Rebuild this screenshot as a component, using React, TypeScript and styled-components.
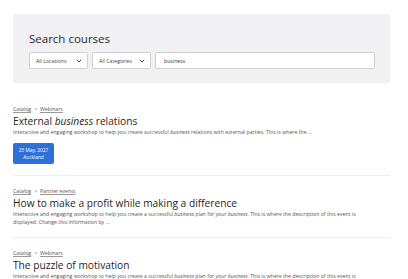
import styled, { createGlobalStyle } from "styled-components";

const GlobalStyle = createGlobalStyle`
  body {
    margin: 0;
    background: #ffffff;
    font-family: "Open Sans", "Noto Sans", sans-serif;
    color: #222226;
  }
`;

interface Course {
  path: string[];
  title: React.ReactNode;
  description: React.ReactNode;
  date?: string;
  city?: string;
}

const courses: Course[] = [
  {
    path: ["Catalog", "Webinars"],
    title: (
      <>
        External <em>business</em> relations
      </>
    ),
    description: (
      <>
        Interactive and engaging workshop to help you create successful <em>business</em> relations
        with external parties. This is where the ...
      </>
    ),
    date: "25 May, 2027",
    city: "Auckland",
  },
  {
    path: ["Catalog", "Partner events"],
    title: "How to make a profit while making a difference",
    description: (
      <>
        Interactive and engaging workshop to help you create a successful <em>business</em> plan for
        your <em>business</em>. This is where the description of this event is displayed. Change this
        information by ...
      </>
    ),
  },
  {
    path: ["Catalog", "Webinars"],
    title: "The puzzle of motivation",
    description: (
      <>
        Interactive and engaging workshop to help you create a successful <em>business</em> plan for
        your <em>business</em>. This is where the description of this event is displayed. Change this
        information by ...
      </>
    ),
  },
];

function Chevron() {
  return (
    <svg width="6" height="4" viewBox="0 0 6 4" fill="none">
      <path d="M1 1l2 2 2-2" stroke="#333" strokeWidth="0.9" strokeLinecap="round" strokeLinejoin="round" />
    </svg>
  );
}

export default function App() {
  return (
    <Page>
      <GlobalStyle />
      <SearchPanel>
        <PanelTitle>Search courses</PanelTitle>
        <Filters>
          <Select>
            All Locations
            <Chevron />
          </Select>
          <Select>
            All Categories
            <Chevron />
          </Select>
          <SearchInput>business</SearchInput>
        </Filters>
      </SearchPanel>
      <List>
        {courses.map((c, i) => (
          <Item key={i}>
            <Crumbs>
              <a>{c.path[0]}</a>
              <Sep>&gt;</Sep>
              <a>{c.path[1]}</a>
            </Crumbs>
            <Title>{c.title}</Title>
            <Description>{c.description}</Description>
            {c.date && (
              <DateBadge>
                <span>{c.date}</span>
                <span>{c.city}</span>
              </DateBadge>
            )}
          </Item>
        ))}
      </List>
    </Page>
  );
}

const Page = styled.div`
  width: 408px;
  height: 279px;
  overflow: hidden;
  padding: 14px 18px 0 13px;
  box-sizing: border-box;
`;

const SearchPanel = styled.section`
  background: #f1f0f3;
  border-radius: 3px;
  padding: 16px 15px 14px 16px;
  height: 69px;
  box-sizing: border-box;
`;

const PanelTitle = styled.h2`
  margin: 0 0 4px;
  font-size: 11.5px;
  font-weight: 500;
  line-height: 18px;
  color: #2a2a2e;
`;

const Filters = styled.div`
  display: flex;
  gap: 4px;
  height: 17px;
`;

const Select = styled.div`
  width: 59px;
  box-sizing: border-box;
  background: #fff;
  border: 1px solid #cfcfd4;
  border-radius: 1.5px;
  display: flex;
  align-items: center;
  justify-content: space-between;
  padding: 0 5px 0 6px;
  font-size: 5.2px;
  color: #444;
`;

const SearchInput = styled.div`
  flex: 1;
  background: #fff;
  border: 1px solid #cfcfd4;
  border-radius: 1.5px;
  display: flex;
  align-items: center;
  padding: 0 8px;
  font-size: 5.2px;
  color: #333;
`;

const List = styled.div`
  display: flex;
  flex-direction: column;
  padding-top: 22px;
`;

const Item = styled.article`
  padding: 0 0 11px;
  margin-bottom: 11px;
  border-bottom: 1px solid #eeeef0;
  &:last-child {
    border-bottom: none;
  }
`;

const Crumbs = styled.div`
  display: flex;
  align-items: center;
  gap: 2px;
  font-size: 5.2px;
  line-height: 8px;
  color: #555;
  a {
    text-decoration: underline;
    text-decoration-color: #999;
  }
`;

const Sep = styled.span`
  font-size: 5px;
  padding: 0 1px;
`;

const Title = styled.h3`
  margin: 1px 0 0;
  font-size: 10.2px;
  font-weight: 400;
  line-height: 14px;
  color: #1f1f23;
`;

const Description = styled.p`
  margin: 0;
  font-size: 5.2px;
  line-height: 8px;
  color: #555;
  max-width: 350px;
`;

const DateBadge = styled.div`
  margin-top: 7px;
  width: 41px;
  height: 21px;
  box-sizing: border-box;
  background: #2d70d8;
  border-radius: 2px;
  color: #fff;
  font-size: 4.8px;
  line-height: 7px;
  display: flex;
  flex-direction: column;
  align-items: center;
  justify-content: center;
`;
